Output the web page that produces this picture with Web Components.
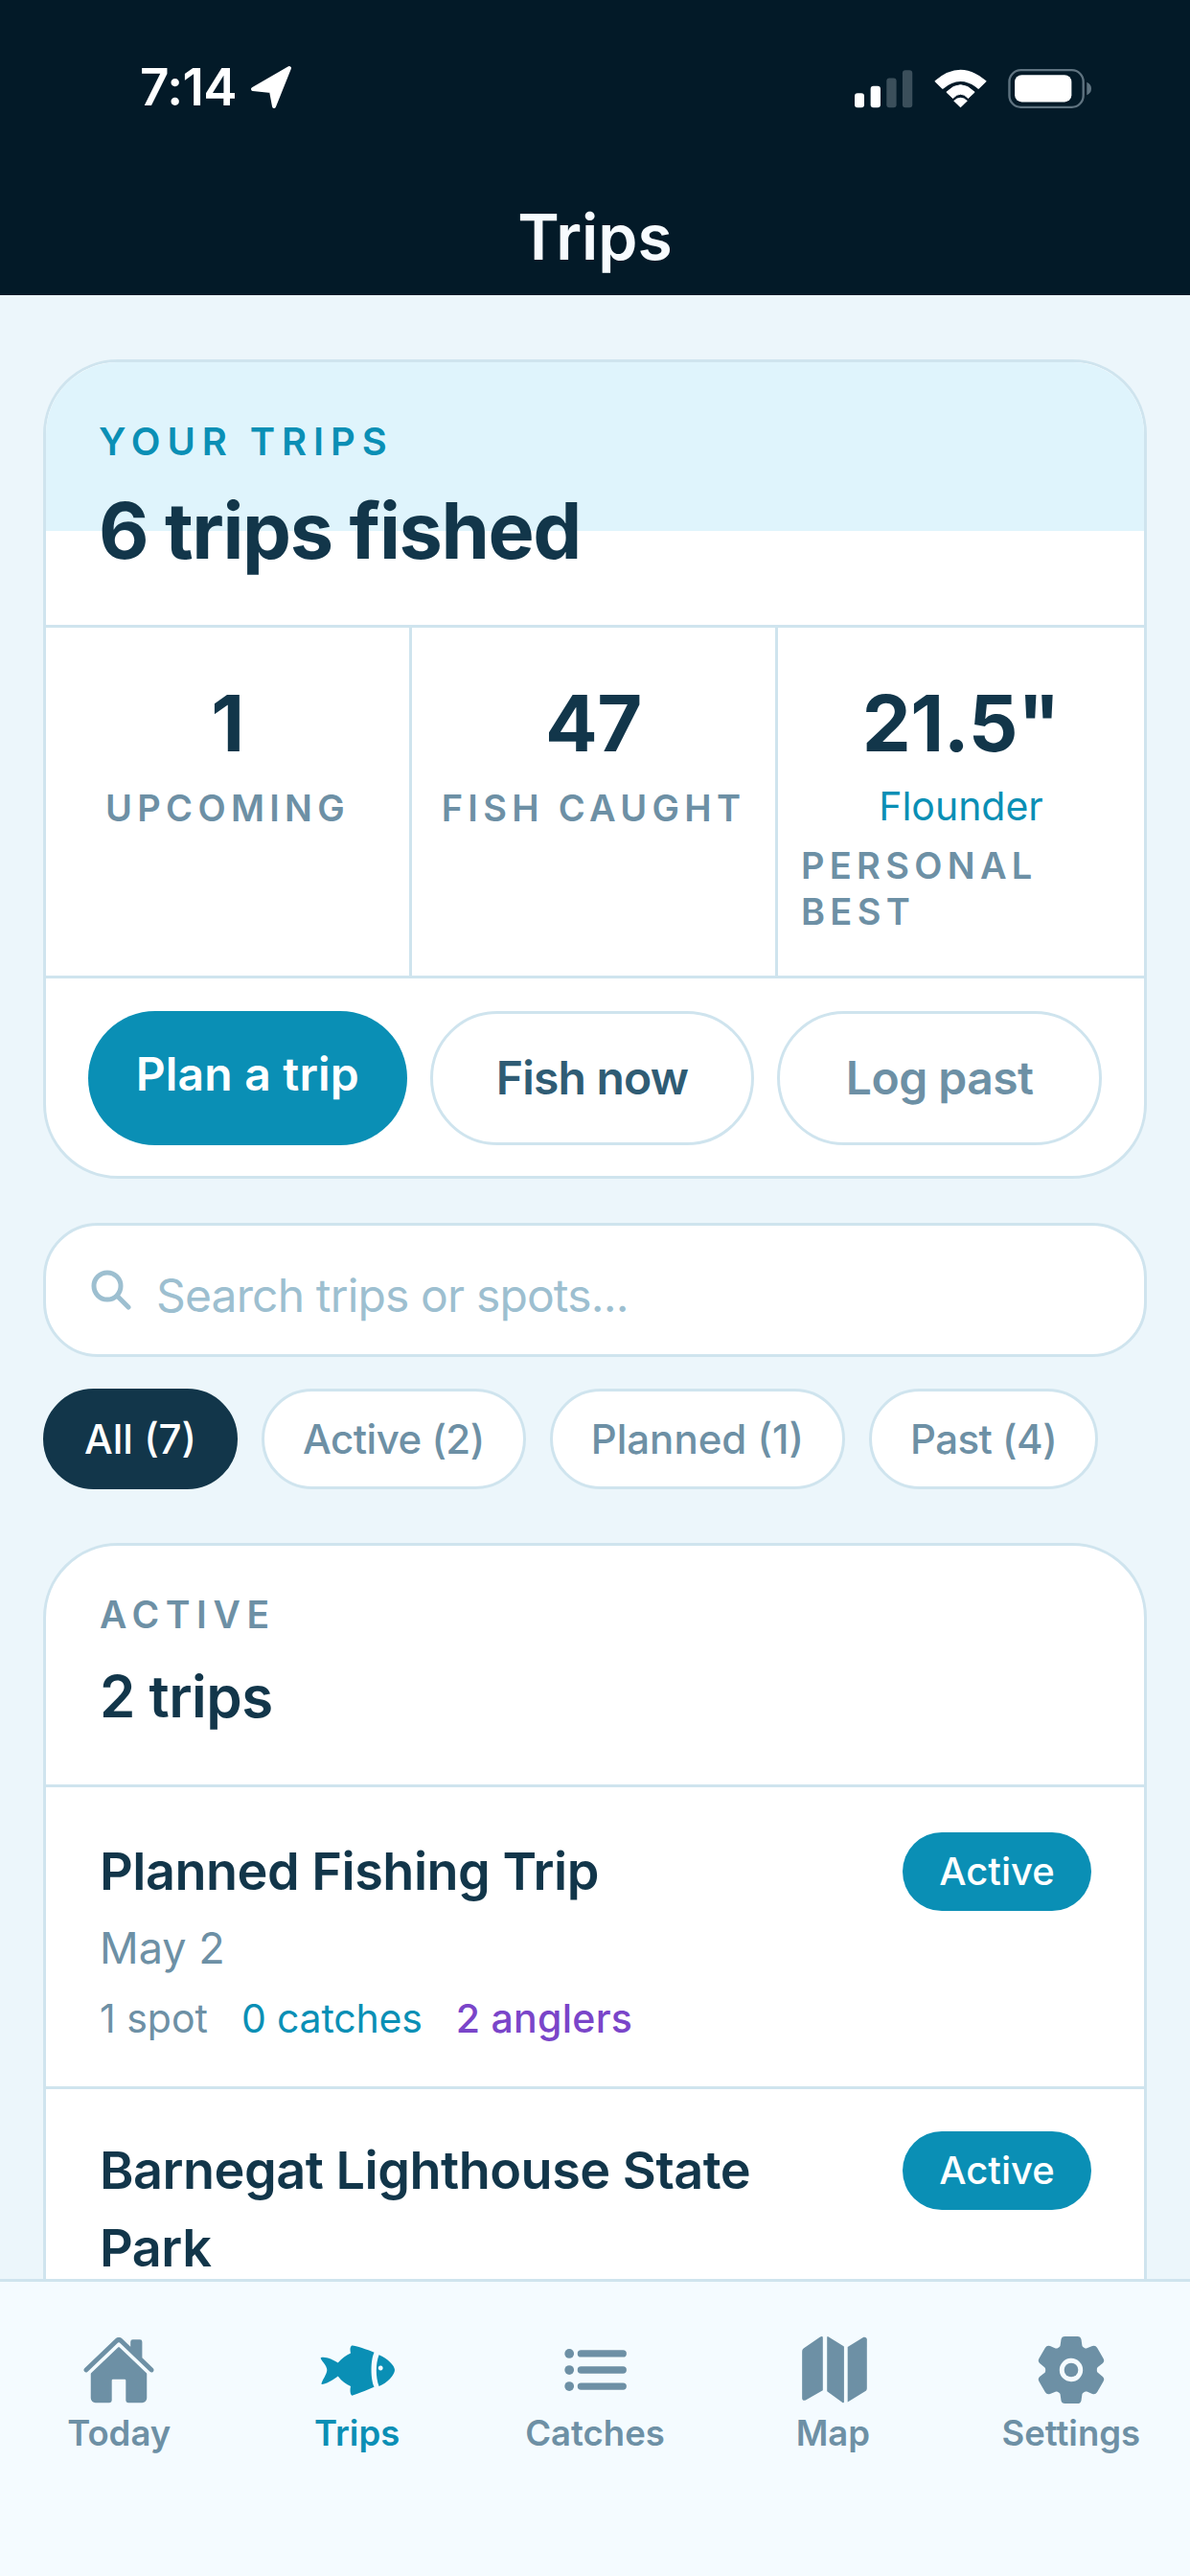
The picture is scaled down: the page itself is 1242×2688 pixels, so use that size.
<!DOCTYPE html>
<html>
<head>
<meta charset="utf-8">
<title>Trips</title>
<style>
html,body{margin:0;padding:0;background:#ecf6fb;}
body{font-family:'Inter','Liberation Sans',sans-serif;color:#12364a;}
</style>
</head>
<body>
<trips-app>
  <status-header title-text="Trips"></status-header>
  <trip-summary heading="6 trips fished" label="YOUR TRIPS">
    <stat-cell value="1" label="UPCOMING"></stat-cell>
    <stat-cell value="47" label="FISH CAUGHT"></stat-cell>
    <stat-cell value='21.5"' note="Flounder" label="PERSONAL BEST"></stat-cell>
    <action-button slot="actions" kind="primary">Plan a trip</action-button>
    <action-button slot="actions" kind="dark">Fish now</action-button>
    <action-button slot="actions" kind="muted">Log past</action-button>
  </trip-summary>
  <search-box placeholder="Search trips or spots..."></search-box>
  <filter-row>
    <filter-chip active>All (7)</filter-chip>
    <filter-chip style="letter-spacing:-.5px">Active (2)</filter-chip>
    <filter-chip>Planned (1)</filter-chip>
    <filter-chip style="letter-spacing:-.5px">Past (4)</filter-chip>
  </filter-row>
  <trip-section label="ACTIVE" heading="2 trips">
    <trip-row name="Planned Fishing Trip" date="May 2" spots="1 spot" catches="0 catches" anglers="2 anglers"></trip-row>
    <trip-row name="Barnegat Lighthouse State Park"></trip-row>
  </trip-section>
  <tab-bar slot="tabs">
    <tab-item icon="home">Today</tab-item>
    <tab-item icon="fish" active>Trips</tab-item>
    <tab-item icon="list">Catches</tab-item>
    <tab-item icon="map">Map</tab-item>
    <tab-item icon="gear">Settings</tab-item>
  </tab-bar>
</trips-app>

<script>
// small helper so each element is just a style + markup string
function shadow(el, html) {
  el.attachShadow({mode: 'open'}).innerHTML = html;
}

class TripsApp extends HTMLElement {
  constructor() {
    super();
    shadow(this, `
    <style>
      :host{display:flex;flex-direction:column;height:2688px;width:1242px;overflow:hidden;background:#ecf6fb;}
      main{flex:1;min-height:0;overflow:hidden;padding:67px 45px 0;display:flex;flex-direction:column;}
    </style>
    <slot name="top"></slot>
    <main><slot></slot></main>
    <slot name="tabs"></slot>`);
    this.querySelector('status-header').slot = 'top';
  }
}

class StatusHeader extends HTMLElement {
  constructor() {
    super();
    shadow(this, `
    <style>
      :host{display:block;height:308px;background:#031a28;color:#f7fbfe;box-sizing:border-box;}
      .status{display:flex;justify-content:space-between;align-items:flex-start;padding:66px 103px 0 146px;height:122px;box-sizing:border-box;}
      .time{display:flex;align-items:center;gap:14px;font:600 53px/50px 'Inter','Liberation Sans',sans-serif;letter-spacing:-.6px;color:#fff;}
      .icons{margin-top:6px;display:block;}
      h1{margin:0;padding-top:89px;text-align:center;font:600 66px/72px 'Inter','Liberation Sans',sans-serif;}
    </style>
    <div class="status">
      <div class="time">7:14
        <svg width="44" height="46" viewBox="0 0 44 46"><path d="M41 3 L3 25 L22 27 L25 43 Z" fill="#fff" stroke="#fff" stroke-width="4" stroke-linejoin="round"/></svg>
      </div>
      <svg class="icons" width="247" height="41" viewBox="215 65 742 122">
        <rect x="215" y="140" width="30" height="45" rx="9" fill="#fff"/>
        <rect x="265" y="118" width="31" height="67" rx="9" fill="#fff"/>
        <rect x="315" y="93" width="31" height="92" rx="9" fill="#3b4f5b"/>
        <rect x="365" y="68" width="31" height="117" rx="9" fill="#3b4f5b"/>
        <path d="M468 103 Q547 35 626 103 L603 125 Q547 78 491 125 Z" fill="#fff" stroke="#fff" stroke-width="4" stroke-linejoin="round"/>
        <path d="M503 137 Q547 92 591 137 L571 156 Q547 130 523 156 Z" fill="#fff" stroke="#fff" stroke-width="3" stroke-linejoin="round"/>
        <path d="M547 185 L525 164 Q547 143 569 164 Z" fill="#fff"/>
        <rect x="700" y="68" width="232" height="116" rx="36" fill="none" stroke="#5f7380" stroke-width="7"/>
        <rect x="717" y="83" width="178" height="85" rx="22" fill="#fff"/>
        <path d="M943 106 Q957 112 957 126 Q957 140 943 146 Z" fill="#5f7380"/>
      </svg>
    </div>
    <h1>${this.getAttribute('title-text')}</h1>`);
  }
}

class TripSummary extends HTMLElement {
  constructor() {
    super();
    shadow(this, `
    <style>
      :host{display:block;flex:none;background:#fff;border:3px solid #cfe4ee;border-radius:78px;overflow:hidden;}
      .hero{height:277px;box-sizing:border-box;padding:59px 55px 0;background:linear-gradient(#dff4fc 0,#dff4fc 176px,#fff 176px);border-bottom:3px solid #cfe4ee;}
      .label{font:600 40px/48px 'Inter','Liberation Sans',sans-serif;letter-spacing:6.9px;color:#0a8fb5;}
      h2{margin:21px 0 0;font:700 81px/96px 'Inter','Liberation Sans',sans-serif;color:#12364a;letter-spacing:-1.4px;}
      .stats{display:grid;grid-template-columns:repeat(3,1fr);height:366px;box-sizing:border-box;border-bottom:3px solid #cfe4ee;}
      .actions{display:flex;gap:24px;padding:34px 44px 32px 44px;}
      ::slotted(stat-cell:not([note])){border-right:3px solid #cfe4ee;}
    </style>
    <div class="hero">
      <div class="label">${this.getAttribute('label')}</div>
      <h2>${this.getAttribute('heading')}</h2>
    </div>
    <div class="stats"><slot></slot></div>
    <div class="actions"><slot name="actions"></slot></div>`);
  }
}

class StatCell extends HTMLElement {
  constructor() {
    super();
    const note = this.getAttribute('note');
    shadow(this, `
    <style>
      :host{display:flex;flex-direction:column;align-items:center;padding:50px 24px 0;min-width:0;box-sizing:border-box;}
      .val{font:700 81px/100px 'Inter','Liberation Sans',sans-serif;color:#12364a;letter-spacing:-.5px;}
      .note{margin-top:12px;font:400 41px/48px 'Inter','Liberation Sans',sans-serif;color:#0a8fb5;}
      .lab{margin-top:14px;font:600 38px/48px 'Inter','Liberation Sans',sans-serif;letter-spacing:5.3px;color:#6d90a5;}
      .note + .lab{margin-top:14px;}
    </style>
    <div class="val">${this.getAttribute('value')}</div>
    ${note ? `<div class="note">${note}</div>` : ''}
    <div class="lab">${this.getAttribute('label')}</div>`);
  }
}

class ActionButton extends HTMLElement {
  constructor() {
    super();
    shadow(this, `
    <style>
      :host{flex:1;display:flex;align-items:center;justify-content:center;height:140px;box-sizing:border-box;border-radius:70px;border:3px solid #cfe4ee;background:#fff;font:600 48px/54px 'Inter','Liberation Sans',sans-serif;letter-spacing:-.8px;color:#2f5c74;}
      :host([kind=primary]){background:#0a8fb5;border:0;color:#fff;letter-spacing:.2px;}
      :host([kind=primary]) span{position:relative;top:-4px;}
      :host([kind=muted]){color:#6d90a5;letter-spacing:-.5px;}
    </style>
    <span><slot></slot></span>`);
  }
}

class SearchBox extends HTMLElement {
  constructor() {
    super();
    shadow(this, `
    <style>
      :host{display:flex;align-items:center;gap:26px;flex:none;height:140px;margin-top:46px;box-sizing:border-box;padding:0 0 0 47px;background:#fff;border:3px solid #cfe4ee;border-radius:57px;font:400 48px/58px 'Inter','Liberation Sans',sans-serif;letter-spacing:-.85px;color:#9dbfd0;}
      svg{flex:none;}
      span{margin-top:12px;}
    </style>
    <svg width="42" height="42" viewBox="0 0 42 42" fill="none" stroke="#9dbfd0" stroke-width="5" stroke-linecap="round"><circle cx="17" cy="17" r="14"/><path d="M27.5 27.5 L39 39"/></svg>
    <span>${this.getAttribute('placeholder')}</span>`);
  }
}

class FilterRow extends HTMLElement {
  constructor() {
    super();
    shadow(this, `
    <style>:host{display:flex;flex:none;gap:25px;margin-top:33px;}</style>
    <slot></slot>`);
  }
}

class FilterChip extends HTMLElement {
  constructor() {
    super();
    shadow(this, `
    <style>
      :host{display:flex;align-items:center;height:105px;box-sizing:border-box;padding:0 40px;border-radius:53px;border:3px solid #cfe4ee;background:#fff;font:500 42px/52px 'Inter','Liberation Sans',sans-serif;color:#6d90a5;}
      :host([active]){background:#12364a;border-color:#12364a;color:#fff;}
    </style>
    <slot></slot>`);
  }
}

class TripSection extends HTMLElement {
  constructor() {
    super();
    shadow(this, `
    <style>
      :host{display:block;flex:none;margin-top:56px;background:#fff;border:3px solid #cfe4ee;border-radius:78px;}
      header{height:249px;box-sizing:border-box;padding:48px 56px 0;}
      .label{font:600 39px/48px 'Inter','Liberation Sans',sans-serif;letter-spacing:6.6px;color:#6d90a5;}
      h3{margin:25px 0 0;font:600 60px/72px 'Inter','Liberation Sans',sans-serif;letter-spacing:-.5px;color:#12364a;}
    </style>
    <header>
      <div class="label">${this.getAttribute('label')}</div>
      <h3>${this.getAttribute('heading')}</h3>
    </header>
    <slot></slot>`);
  }
}

class TripRow extends HTMLElement {
  constructor() {
    super();
    const date = this.getAttribute('date');
    const anglers = this.getAttribute('anglers');
    shadow(this, `
    <style>
      :host{display:flex;justify-content:space-between;align-items:flex-start;gap:48px;border-top:3px solid #cfe4ee;padding:47px 55px 0 56px;height:315px;box-sizing:border-box;}
      :host(:last-child){padding-top:44px;}
      .name{font:600 54px/81px 'Inter','Liberation Sans',sans-serif;letter-spacing:-.5px;color:#12364a;}
      .date{font:400 45px/60px 'Inter','Liberation Sans',sans-serif;color:#6d90a5;margin-top:10px;}
      .meta{display:flex;gap:35px;margin-top:19px;font:400 41px/48px 'Inter','Liberation Sans',sans-serif;color:#6d90a5;}
      .c{color:#0a8fb5;letter-spacing:-.2px;}
      .a{color:#7a45c9;font-weight:500;letter-spacing:.3px;}
      .badge{flex:none;height:82px;width:197px;border-radius:41px;background:#0a8fb5;color:#fff;display:flex;align-items:center;justify-content:center;font:500 40px/48px 'Inter','Liberation Sans',sans-serif;}
    </style>
    <div>
      <div class="name">${this.getAttribute('name')}</div>
      ${date ? `<div class="date">${date}</div>
      <div class="meta"><span>${this.getAttribute('spots')}</span><span class="c">${this.getAttribute('catches')}</span><span class="a">${anglers}</span></div>` : ''}
    </div>
    <div class="badge">Active</div>`);
  }
}

class TabBar extends HTMLElement {
  constructor() {
    super();
    shadow(this, `
    <style>:host{display:grid;grid-template-columns:repeat(5,1fr);flex:none;height:310px;box-sizing:border-box;padding-top:53px;background:#f4fbff;border-top:3px solid #cfe4ee;position:relative;}</style>
    <slot></slot>`);
  }
}

const TAB_ICONS = {
  home: `<path d="M261.56 101.28a8 8 0 00-11.06 0L66.4 277.15a8 8 0 00-2.47 5.79L63.9 448a32 32 0 0032 32H192a16 16 0 0016-16V328a8 8 0 018-8h80a8 8 0 018 8v136a16 16 0 0016 16h96.06a32 32 0 0032-32V282.94a8 8 0 00-2.47-5.79z"/><path d="M490.91 244.15l-74.8-71.56V64a16 16 0 00-16-16h-48a16 16 0 00-16 16v32l-57.92-55.38C272.77 35.14 264.71 32 256 32c-8.68 0-16.72 3.14-22.14 8.63l-212.7 203.5c-6.22 6-7 15.87-1.34 22.37A16 16 0 0043 267.56L250.5 69.28a8 8 0 0111.06 0l207.52 198.28a16 16 0 0022.59-.44c6.14-6.36 5.63-16.86-.76-22.97z"/>`,
  fish: `<path d="M6 172 C30 160 90 185 123 206 C150 175 180 155 210 141 C205 120 205 100 216 90 C230 84 320 115 371 137 C345 190 345 320 371 373 C320 395 235 430 220 431 C205 425 205 390 210 368 C180 355 150 335 123 299 C90 325 35 355 12 355 C0 345 48 290 48 256 C48 220 -5 180 6 172 Z"/><path fill-rule="evenodd" d="M404 152 C460 175 512 225 512 256 C512 290 460 345 404 368 C380 300 380 215 404 152 Z M415 227 a16 16 0 1 0 .01 0 Z"/>`,
  list: `<g fill="none" stroke="currentColor"><path stroke-width="48" stroke-linecap="round" d="M160 144h288M160 256h288M160 368h288"/></g><circle cx="80" cy="144" r="32"/><circle cx="80" cy="256" r="32"/><circle cx="80" cy="368" r="32"/>`,
  map: `<g transform="translate(11 0)"><path d="M178 36 L178 396 L60 462 C48 470 36 462 36 450 L36 130 C36 118 40 112 48 106 L160 30 C170 24 178 26 178 36 Z"/><path d="M212 32 L318 98 L318 476 L212 400 Z" stroke="currentColor" stroke-width="10" stroke-linejoin="round"/><path d="M348 98 L452 34 C466 26 480 34 480 48 L480 380 C480 390 476 396 468 402 L348 476 Z"/></g>`,
  gear: `<circle cx="256" cy="256" r="48"/><path d="M470.39 300l-.47-.38-31.56-24.75a16.11 16.11 0 01-6.1-13.33v-11.56a16 16 0 016.11-13.22L469.92 212l.47-.38a26.68 26.68 0 005.9-34.06l-42.71-73.9a1.59 1.59 0 01-.13-.22A26.86 26.86 0 00401 92.14l-.35.13-37.1 14.93a15.94 15.94 0 01-14.47-1.29q-4.92-3.1-10-5.86a15.94 15.94 0 01-8.19-11.82l-5.59-39.59-.12-.72A27.22 27.22 0 00298.76 26h-85.52a26.92 26.92 0 00-26.45 22.39l-.09.56-5.57 39.67a16 16 0 01-8.13 11.82 175.21 175.21 0 00-10 5.82 15.92 15.92 0 01-14.43 1.27l-37.13-15-.35-.14a26.87 26.87 0 00-32.48 11.34l-.13.22-42.77 73.95a26.71 26.71 0 005.9 34.1l.47.38 31.56 24.75a16.11 16.11 0 016.1 13.33v11.56a16 16 0 01-6.11 13.22L42.08 300l-.47.38a26.68 26.68 0 00-5.9 34.06l42.71 73.9a1.59 1.59 0 01.13.22 26.86 26.86 0 0032.45 11.3l.35-.13 37.07-14.93a15.94 15.94 0 0114.47 1.29q4.92 3.11 10 5.86a15.94 15.94 0 018.19 11.82l5.56 39.59.12.72A27.22 27.22 0 00213.24 486h85.52a26.92 26.92 0 0026.45-22.39l.09-.56 5.57-39.67a16 16 0 018.18-11.82c3.42-1.84 6.76-3.79 10-5.82a15.92 15.92 0 0114.43-1.27l37.13 14.95.35.14a26.85 26.85 0 0032.48-11.34 2.53 2.53 0 01.13-.22l42.71-73.89a26.7 26.7 0 00-5.89-34.11zm-134.48-40.24a80 80 0 11-83.66-83.67 80.21 80.21 0 0183.66 83.67z"/>`
};

class TabItem extends HTMLElement {
  constructor() {
    super();
    shadow(this, `
    <style>
      :host{display:flex;flex-direction:column;align-items:center;color:#6d90a5;font:600 36.5px/44px 'Inter','Liberation Sans',sans-serif;}
      :host([active]){color:#0a8fb5;}
      svg{display:block;fill:currentColor;margin-bottom:5px;}
    </style>
    <svg width="78" height="78" viewBox="0 0 512 512">${TAB_ICONS[this.getAttribute('icon')]}</svg>
    <slot></slot>`);
  }
}

customElements.define('trips-app', TripsApp);
customElements.define('status-header', StatusHeader);
customElements.define('trip-summary', TripSummary);
customElements.define('stat-cell', StatCell);
customElements.define('action-button', ActionButton);
customElements.define('search-box', SearchBox);
customElements.define('filter-row', FilterRow);
customElements.define('filter-chip', FilterChip);
customElements.define('trip-section', TripSection);
customElements.define('trip-row', TripRow);
customElements.define('tab-bar', TabBar);
customElements.define('tab-item', TabItem);
</script>
</body>
</html>
